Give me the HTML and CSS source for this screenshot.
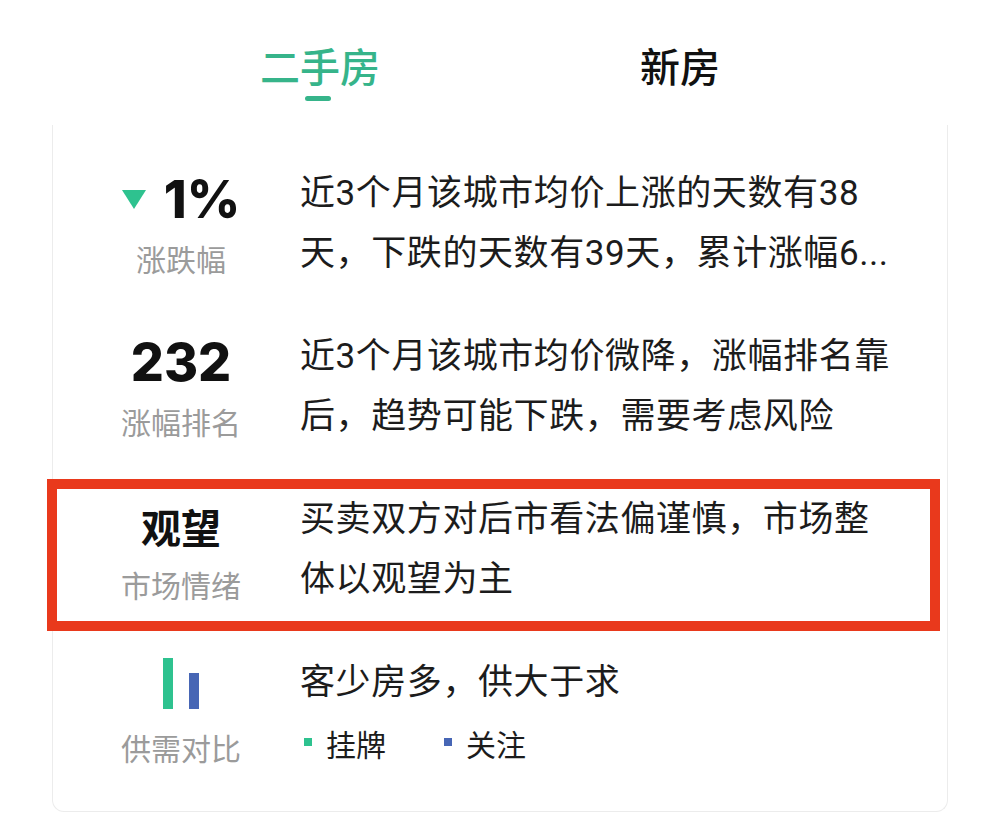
FILE: index.html
```html
<!DOCTYPE html>
<html lang="zh-CN">
<head>
<meta charset="utf-8">
<title>二手房</title>
<link rel="stylesheet" href="styles.css">
</head>
<body>
<div class="page">
  <div class="tabs">
    <div class="tab active">
      <span class="tab-text">二手房</span>
      <span class="tab-bar"></span>
    </div>
    <div class="tab">
      <span class="tab-text">新房</span>
    </div>
  </div>

  <div class="card">
    <div class="row">
      <div class="meta">
        <div class="value">
          <svg class="tri" width="24" height="19" viewBox="0 0 24 19"><polygon points="0,0 24,0 12,19" fill="#2ec28f"/></svg>
          <span class="num">1%</span>
        </div>
        <div class="label">涨跌幅</div>
      </div>
      <div class="desc">
        <div class="line">近3个月该城市均价上涨的天数有38</div>
        <div class="line">天，下跌的天数有39天，累计涨幅6...</div>
      </div>
    </div>

    <div class="row">
      <div class="meta">
        <div class="value"><span class="num">232</span></div>
        <div class="label">涨幅排名</div>
      </div>
      <div class="desc">
        <div class="line">近3个月该城市均价微降，涨幅排名靠</div>
        <div class="line">后，趋势可能下跌，需要考虑风险</div>
      </div>
    </div>

    <div class="row highlight">
      <div class="meta">
        <div class="value"><span class="word">观望</span></div>
        <div class="label">市场情绪</div>
      </div>
      <div class="desc">
        <div class="line">买卖双方对后市看法偏谨慎，市场整</div>
        <div class="line">体以观望为主</div>
      </div>
    </div>

    <div class="row">
      <div class="meta">
        <div class="bars">
          <span class="bar bar-green"></span>
          <span class="bar bar-blue"></span>
        </div>
        <div class="label">供需对比</div>
      </div>
      <div class="desc">
        <div class="line">客少房多，供大于求</div>
        <div class="line legend">
          <span class="legend-item"><span class="dot dot-green"></span>挂牌</span>
          <span class="legend-item"><span class="dot dot-blue"></span>关注</span>
        </div>
      </div>
    </div>
  </div>
</div>
</body>
</html>
```

FILE: styles.css
```css
* {
  box-sizing: border-box;
}

html, body {
  margin: 0;
  padding: 0;
  background: #ffffff;
}

body {
  font-family: Roboto, "Noto Sans CJK SC", sans-serif;
  color: #1c1c1c;
}

.page {
  width: 1000px;
  height: 820px;
  overflow: hidden;
}

.tabs {
  width: 720px;
  margin: 0 auto;
  padding-top: 37px;
  display: grid;
  grid-template-columns: 1fr 1fr;
}

.tab {
  display: flex;
  flex-direction: column;
  align-items: center;
}

.tab-text {
  font-family: "Noto Sans CJK SC", sans-serif;
  font-size: 40px;
  line-height: 56px;
  font-weight: 500;
  color: #111111;
}

.tab.active .tab-text {
  color: #36b48a;
}

.tab-bar {
  display: block;
  width: 26px;
  height: 5px;
  border-radius: 3px;
  background: #36b48a;
  margin-top: 3px;
  margin-right: 4px;
}

.card {
  margin: 24px 52px 0;
  border: 1px solid #ececec;
  border-top: 0;
  border-radius: 0 0 12px 12px;
  padding: 39px 0 38px;
  display: flex;
  flex-direction: column;
  gap: 43px;
}

.row {
  position: relative;
  display: flex;
  padding-left: 9px;
}

.row.highlight::after {
  content: "";
  position: absolute;
  left: -6px;
  right: 7px;
  top: -11px;
  bottom: -21px;
  border: 10px solid #e9391c;
  pointer-events: none;
}

.meta {
  width: 238px;
  flex: none;
  display: flex;
  flex-direction: column;
  align-items: center;
}

.value {
  height: 72px;
  display: flex;
  align-items: center;
  justify-content: center;
  gap: 18px;
}

.tri {
  display: block;
  margin-top: -2px;
}

.num {
  font-family: Inter, "DejaVu Sans", sans-serif;
  font-weight: 800;
  font-size: 52px;
  line-height: 1;
  color: #111111;
}

.word {
  font-family: "Noto Sans CJK SC", sans-serif;
  font-weight: 700;
  font-size: 40px;
  line-height: 72px;
  color: #111111;
}

.label {
  font-family: "Noto Sans CJK SC", sans-serif;
  font-size: 30px;
  line-height: 44px;
  color: #9b9b9b;
}

.bars {
  height: 72px;
  padding-bottom: 16px;
  display: flex;
  align-items: flex-end;
  justify-content: center;
  gap: 16px;
}

.bar {
  display: block;
  width: 10px;
}

.bar-green {
  height: 51px;
  background: #2ec28f;
}

.bar-blue {
  height: 36px;
  background: #4766b5;
}

.desc {
  font-size: 35px;
  line-height: 60px;
  letter-spacing: 0.6px;
  white-space: nowrap;
  color: #1c1c1c;
}

.line {
  height: 60px;
}

.legend {
  display: flex;
  align-items: center;
  gap: 58px;
  padding-left: 4px;
  font-family: "Noto Sans CJK SC", sans-serif;
  font-size: 30px;
  letter-spacing: 0;
}

.legend-item {
  display: flex;
  align-items: center;
  gap: 14px;
}

.dot {
  display: block;
  width: 8px;
  height: 8px;
  margin-top: -2px;
}

.dot-green {
  background: #2ec28f;
}

.dot-blue {
  background: #4766b5;
}
```
